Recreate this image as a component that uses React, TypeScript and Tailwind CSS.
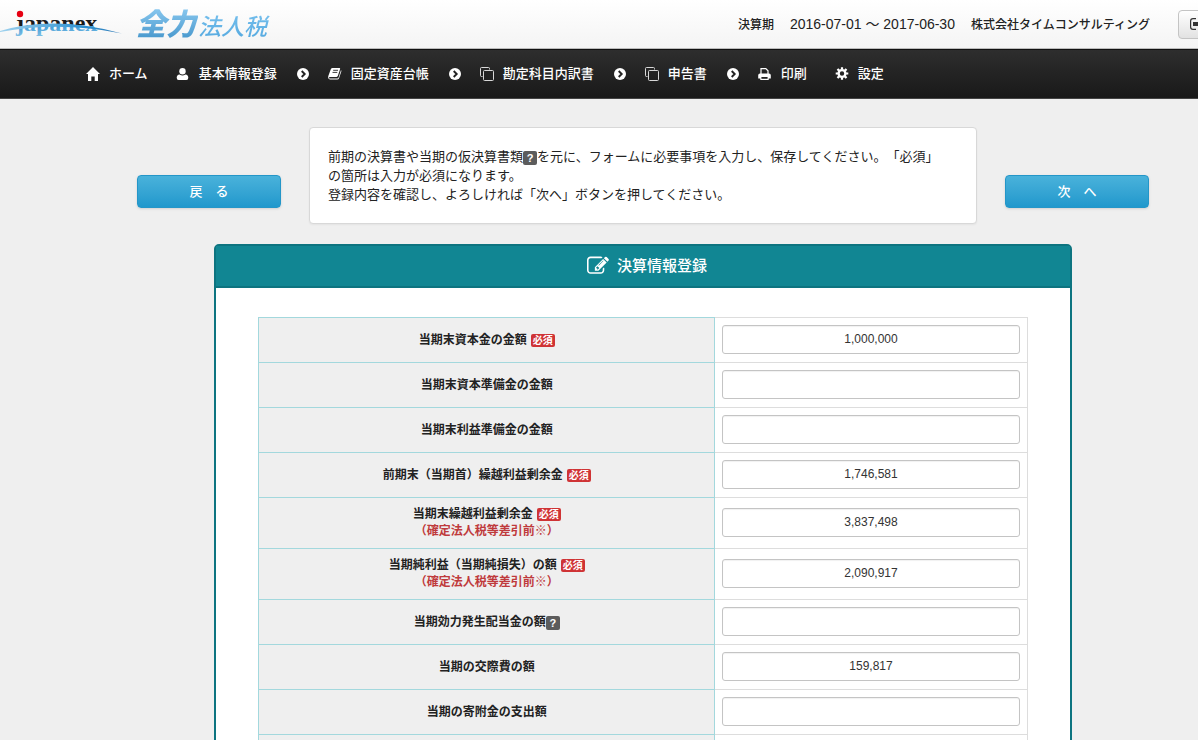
import React from 'react';
import { clsx } from 'clsx';

interface FieldRow {
  id: string;
  label: string;
  value: string;
  required?: boolean;
  help?: boolean;
  note?: string;
}

const NOTE = '（確定法人税等差引前※）';

const ROWS: FieldRow[] = [
  { id: 'capital', label: '当期末資本金の金額', value: '1,000,000', required: true },
  { id: 'capital-reserve', label: '当期末資本準備金の金額', value: '' },
  { id: 'profit-reserve', label: '当期末利益準備金の金額', value: '' },
  { id: 'retained-begin', label: '前期末（当期首）繰越利益剰余金', value: '1,746,581', required: true },
  { id: 'retained-end', label: '当期末繰越利益剰余金', value: '3,837,498', required: true, note: NOTE },
  { id: 'net-income', label: '当期純利益（当期純損失）の額', value: '2,090,917', required: true, note: NOTE },
  { id: 'dividend', label: '当期効力発生配当金の額', value: '', help: true },
  { id: 'entertainment', label: '当期の交際費の額', value: '159,817' },
  { id: 'donation', label: '当期の寄附金の支出額', value: '' },
  { id: 'donation-designated', label: '指定寄附金等の金額', value: '' },
];

const HomeIcon = () => (
  <svg viewBox="0 0 14 14" className="h-3.5 w-3.5" fill="currentColor" aria-hidden="true">
    <path d="M7 0 L14 7 H12 V14 H8.7 V9.5 H5.3 V14 H2 V7 H0 Z" />
  </svg>
);

const UserIcon = () => (
  <svg viewBox="0 0 14 14" className="h-3.5 w-3.5" fill="currentColor" aria-hidden="true">
    <circle cx="6.5" cy="4.2" r="3.2" />
    <path d="M3.6 7.4 Q6.5 9.6 9.4 7.4 Q12.3 7.6 12.3 10.8 Q12.3 13 10.4 13 H2.6 Q.7 13 .7 10.8 Q.7 7.6 3.6 7.4 Z" />
  </svg>
);

const BookIcon = () => (
  <svg viewBox="0 0 14 14" className="h-3.5 w-3.5" aria-hidden="true">
    <path
      d="M4.6 1 H11.5 Q12.4 1 12.1 1.9 L9.8 9.1 Q9.5 9.9 8.6 9.9 H2 Q.8 10 1 10.9 Q1.2 11.5 2.1 11.5 H9.4 Q10.3 11.5 10.6 10.5 L13 2.9 Q13.6 3.5 13.3 4.5 L11 11.3 Q10.6 12.6 9.3 12.6 H2.2 Q.4 12.6 .2 10.8 Q0 9.8 .5 8.5 L2.8 2.3 Q3.3 1 4.6 1 Z"
      fill="currentColor"
    />
    <path d="M5.2 3.3 H10 M4.5 5.4 H9.3" stroke="#262626" strokeWidth="0.9" />
  </svg>
);

const CopyIcon = () => (
  <svg viewBox="0 0 14 14" className="h-3.5 w-3.5" fill="none" stroke="#d8d8d8" aria-hidden="true">
    <path d="M2.5 9.5 H1.5 Q.5 9.5 .5 8.5 V1.5 Q.5 .5 1.5 .5 H8.5 Q9.5 .5 9.5 1.5 V2.5" />
    <rect x="3.5" y="3.5" width="10" height="10" rx="1" />
  </svg>
);

const PrintIcon = () => (
  <svg viewBox="0 0 14 14" className="h-3.5 w-3.5" aria-hidden="true">
    <path d="M3 7 V1.6 H7.8 L10 3.8 V7" fill="none" stroke="currentColor" strokeWidth="1.2" />
    <path d="M2 6.5 H11 Q12.8 6.5 12.8 8.2 V11.5 H10.7 V13 H2.3 V11.5 H.2 V8.2 Q.2 6.5 2 6.5 Z" fill="currentColor" />
    <path d="M3.4 10 H9.6 V11.8 H3.4 Z" fill="#222222" />
  </svg>
);

const GearIcon = () => (
  <svg viewBox="0 0 14 14" className="h-3.5 w-3.5" aria-hidden="true">
    <circle cx="7" cy="6.5" r="3.4" fill="none" stroke="currentColor" strokeWidth="2.4" />
    <path
      d="M7 0.2 V2.4 M7 10.6 V12.8 M.7 6.5 H2.9 M11.1 6.5 H13.3 M2.5 2 L4.1 3.6 M9.9 9.4 L11.5 11 M11.5 2 L9.9 3.6 M4.1 9.4 L2.5 11"
      stroke="currentColor"
      strokeWidth="2.2"
    />
  </svg>
);

const ChevronIcon = () => (
  <svg viewBox="0 0 12 12" className="h-3 w-3" aria-hidden="true">
    <circle cx="6" cy="6" r="6" fill="currentColor" />
    <path d="M4.7 3 L7.7 6 L4.7 9" fill="none" stroke="#222222" strokeWidth="1.9" />
  </svg>
);

const EditIcon = () => (
  <svg viewBox="0 0 1792 1792" className="h-5.5 w-5.5" fill="currentColor" aria-hidden="true">
    <path d="M888 1184l116-116-152-152-116 116v56h96v96h56zm440-720q-16-16-33 1l-350 350q-17 17-1 33t33-1l350-350q17-17 1-33zm80 594v190q0 119-84.5 203.5t-203.5 84.5h-832q-119 0-203.5-84.5t-84.5-203.5v-832q0-119 84.5-203.5t203.5-84.5h832q63 0 117 25 15 7 18 23 3 17-9 29l-49 49q-14 14-32 8-23-6-45-6h-832q-66 0-113 47t-47 113v832q0 66 47 113t113 47h832q66 0 113-47t47-113v-126q0-13 9-22l64-64q15-15 35-7t20 29zm-96-738l288 288-672 672h-288v-288zm444 132l-92 92-288-288 92-92q28-28 68-28t68 28l152 152q28 28 28 68t-28 68z" />
  </svg>
);

const NAV = [
  { label: 'ホーム', icon: HomeIcon, menu: false },
  { label: '基本情報登録', icon: UserIcon, menu: true },
  { label: '固定資産台帳', icon: BookIcon, menu: true },
  { label: '勘定科目内訳書', icon: CopyIcon, menu: true },
  { label: '申告書', icon: CopyIcon, menu: true },
  { label: '印刷', icon: PrintIcon, menu: false },
  { label: '設定', icon: GearIcon, menu: false },
];

const Logo = () => (
  <svg viewBox="0 0 124 48" className="h-12 w-[124px]" role="img" aria-label="japanex">
    <defs>
      {/* transparent at the top: the dot of the j is the red circle */}
      <linearGradient id="logo-letters" gradientUnits="userSpaceOnUse" x1="0" y1="14" x2="0" y2="38">
        <stop offset="0.2" stopColor="#1a1a1a" stopOpacity="0" />
        <stop offset="0.2" stopColor="#1a1a1a" />
        <stop offset="0.48" stopColor="#1a1a1a" />
        <stop offset="0.48" stopColor="#3f9bd6" />
        <stop offset="1" stopColor="#8ac4e6" />
      </linearGradient>
      <linearGradient id="logo-arc" x1="0" y1="0" x2="1" y2="0">
        <stop offset="0" stopColor="#9fd2ee" />
        <stop offset="0.7" stopColor="#2a8fd0" />
        <stop offset="1" stopColor="#3a7fb8" />
      </linearGradient>
    </defs>
    <text x="16" y="31" fontSize="24" fontWeight="700" fontFamily="'Liberation Serif', serif" fill="url(#logo-letters)">
      japanex
    </text>
    <path d="M0 31 Q55 15 122 33.5 Q60 21 0 32 Z" fill="url(#logo-arc)" />
    <circle cx="20" cy="14" r="3.2" fill="#e60012" />
  </svg>
);

const HelpBadge = () => (
  <span className="inline-block h-3.5 w-3.5 rounded-xs bg-[#5c5c5c] text-center align-[-1px] text-[11px] leading-3.5 font-bold text-white">
    ?
  </span>
);

const BlueButton = ({ children }: { children: React.ReactNode }) => (
  <button
    type="button"
    className="mt-12 h-[33px] w-36 shrink-0 rounded-[4px] border border-[#2496c8] bg-linear-to-b from-[#49b2db] to-[#1f98cc] text-[13px] font-medium text-white shadow-sm"
  >
    {children}
  </button>
);

const Header = () => (
  <header className="flex h-[49px] items-center border-b border-[#bbbbbb] bg-linear-to-b from-white to-[#f4f4f4]">
    <Logo />
    <a href="#top" className="ml-3 flex items-baseline pt-1 italic">
      <span className="bg-linear-to-b from-[#8fcdf3] to-[#3a8fc6] bg-clip-text pr-0.5 text-[30px] leading-10 font-black text-transparent">
        全力
      </span>
      <span className="bg-linear-to-b from-[#7cc4f0] to-[#4ba3dc] bg-clip-text pr-1 text-[23px] leading-10 font-medium text-transparent">
        法人税
      </span>
    </a>
    <p className="ml-auto flex items-baseline gap-4 text-[12px] font-medium text-[#222222]">
      <span>決算期</span>
      <span className="text-[14px] font-normal">2016-07-01 〜 2017-06-30</span>
      <span>株式会社タイムコンサルティング</span>
    </p>
    <button
      type="button"
      aria-label="ログアウト"
      className="mr-3 ml-7 h-[29px] w-24 rounded-[4px] border border-[#c4c4c4] bg-linear-to-b from-white to-[#e2e2e2] pl-[11px]"
    >
      <svg viewBox="0 0 14 12" className="h-3 w-3.5" aria-hidden="true">
        <path d="M6 .6 H3 Q.6 .6 .6 3 V9 Q.6 11.4 3 11.4 H6" fill="none" stroke="#333333" strokeWidth="1.2" />
        <path d="M3 4 H8 V1.5 L13 6 L8 10.5 V8 H3 Z" fill="#333333" />
      </svg>
    </button>
  </header>
);

const NavBar = () => (
  <nav className="h-[50px] border-t border-b border-t-[#111111] border-b-[#444444] bg-linear-to-b from-[#2e2e2e] to-[#191919] pl-[86px] text-white">
    <ul className="flex h-full items-center">
      {NAV.map(({ label, icon: Icon, menu }) => (
        <li key={label} className={clsx('flex items-center', menu ? 'mr-[19px]' : 'mr-7')}>
          <a href="#top" className="flex items-center gap-[9px] text-[13px] font-medium">
            <Icon />
            {label}
          </a>
          {menu && (
            <span className="ml-5">
              <ChevronIcon />
            </span>
          )}
        </li>
      ))}
    </ul>
  </nav>
);

const FormRow = ({ row }: { row: FieldRow }) => (
  <tr className={row.note ? 'h-[51px]' : 'h-[45px]'}>
    <th scope="row" className="w-[456px] border border-[#a3d8dd] bg-[#efefef] p-0 text-center text-[12px] leading-[17px] font-bold">
      <label htmlFor={row.id}>
        {row.label}
        {row.help && <HelpBadge />}
        {row.required && (
          <span className="ml-1 inline-block rounded-xs bg-[#cf3335] px-0.5 text-[10px] leading-[13px] text-white">
            必須
          </span>
        )}
        {row.note && <span className="block text-[#bf3a3c]">{row.note}</span>}
      </label>
    </th>
    <td className="border border-[#dddddd] px-[7px] pt-0 pb-0.5">
      <input
        id={row.id}
        type="text"
        defaultValue={row.value}
        className="block h-[29px] w-full rounded-[3px] border border-[#c4c4c4] bg-white text-center text-[12px] text-[#333333] shadow-[inset_0_1px_1px_rgba(0,0,0,0.06)]"
      />
    </td>
  </tr>
);

const App: React.FC = () => {
  return (
    <div className="min-h-screen overflow-x-clip bg-[#efefef] font-['Liberation_Sans','Noto_Sans_CJK_JP',sans-serif] text-[#222222] [text-spacing-trim:space-all]">
      {/* the layout never gets narrower than this, the window clips the rest */}
      <div className="min-w-[1286px]">
        <Header />
        <NavBar />

        <main className="pt-7">
          <div className="mx-auto flex max-w-[1012px] items-start gap-7">
            <BlueButton>戻　る</BlueButton>
            <div className="flex-1 rounded-[4px] border border-[#d8d8d8] bg-white pt-[19px] pr-9 pb-[19px] pl-[18px] text-[13px] leading-[19px] shadow-xs">
              <p>
                前期の決算書や当期の仮決算書類
                <HelpBadge />
                を元に、フォームに必要事項を入力し、保存してください。「必須」の箇所は入力が必須になります。
                <br />
                登録内容を確認し、よろしければ「次へ」ボタンを押してください。
              </p>
            </div>
            <BlueButton>次　へ</BlueButton>
          </div>

          <section className="mx-auto mt-5 w-2/3 rounded-[5px] border-2 border-[#0d7480] bg-white">
            <h1 className="flex h-[42px] items-center justify-center gap-2 border-b-2 border-[#0d7480] bg-[#118693] pl-2 text-[15px] font-medium text-white">
              <EditIcon />
              決算情報登録
            </h1>
            <form className="px-[42px] pt-[29px] pb-10">
              <table className="w-full border-collapse">
                <tbody>
                  {ROWS.map((row) => (
                    <FormRow key={row.id} row={row} />
                  ))}
                </tbody>
              </table>
            </form>
          </section>
        </main>
      </div>
    </div>
  );
};

export default App;
